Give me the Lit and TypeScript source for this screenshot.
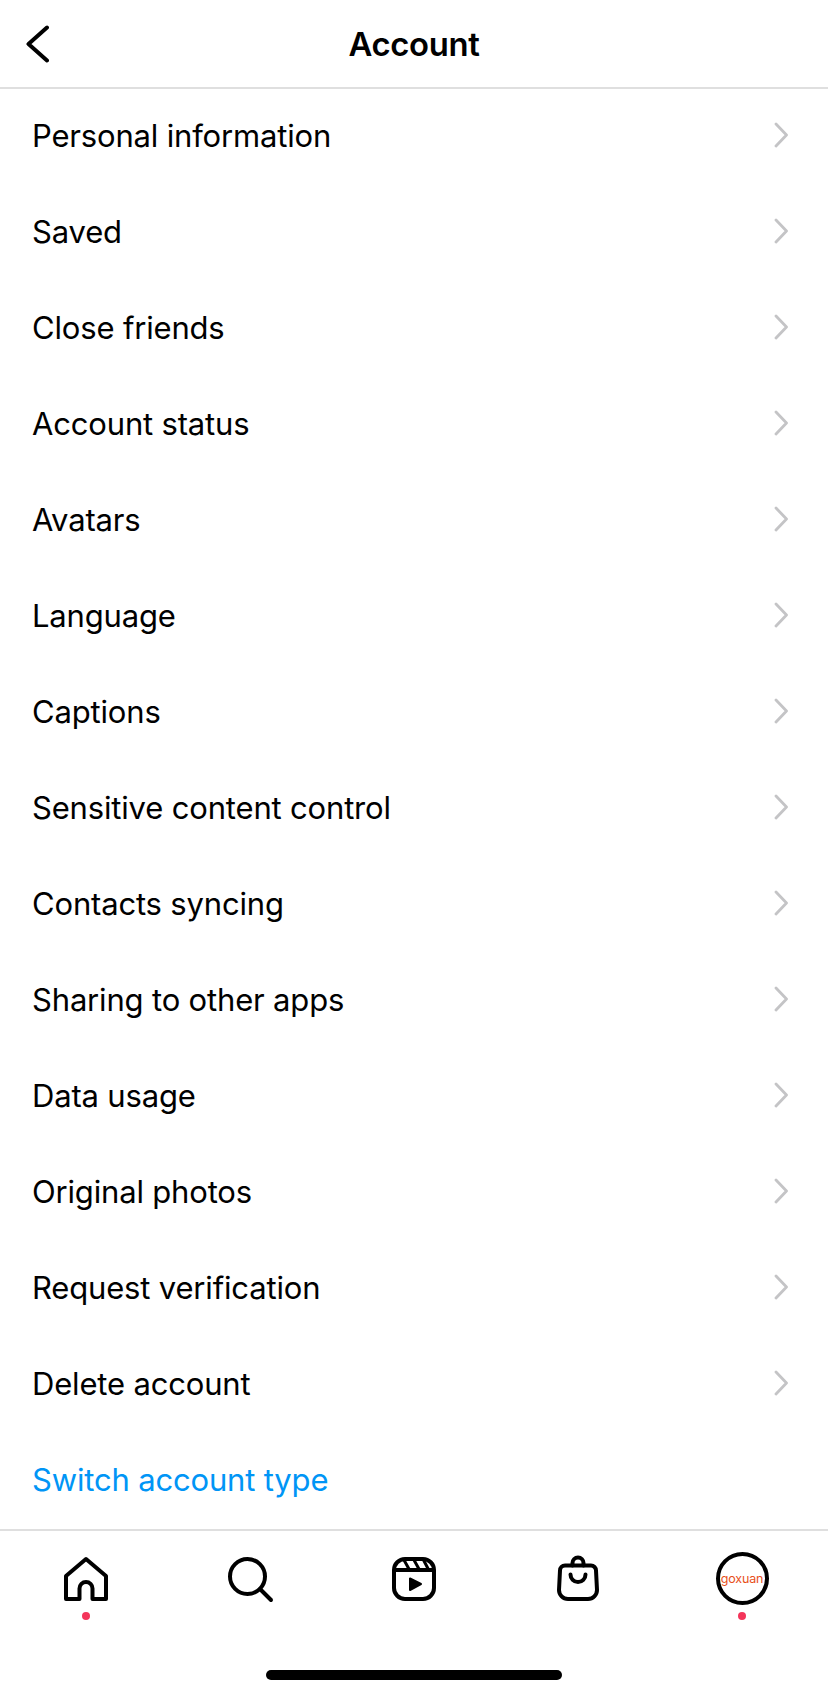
import { LitElement, html, css, svg } from "lit";
import { customElement } from "lit/decorators.js";

const ITEMS = [
  "Personal information", "Saved", "Close friends", "Account status", "Avatars", "Language", "Captions",
  "Sensitive content control", "Contacts syncing", "Sharing to other apps", "Data usage", "Original photos",
  "Request verification", "Delete account",
];

const chevron = html`<svg class="chev" width="14" height="26" viewBox="0 0 14 26" fill="none"><path d="M2 2l10.5 11L2 24" stroke="#c4c4c6" stroke-width="2.8" stroke-linecap="round" stroke-linejoin="round"/></svg>`;

const ic = (body: unknown) => html`<svg width="48" height="48" viewBox="0 0 48 48" fill="none" stroke="#000" stroke-width="4" stroke-linejoin="round" stroke-linecap="round">${body}</svg>`;

const home = ic(svg`<path d="M24 4L44 21V44H30.5V33.5a6.5 6.5 0 0 0-13 0V44H4V21Z" stroke-linecap="butt"/>`);
const search = ic(svg`<circle cx="21.5" cy="21.5" r="17.5"/><path d="M34 34L45 45"/>`);
const reels = ic(svg`<rect x="4" y="4" width="40" height="40" rx="11"/><path d="M5 15H43"/><path d="M14 5L19.5 15M24 5L29.5 15M33.5 5L38.5 14.5" stroke-width="3"/><path d="M20 23.5V35L31 29Z" fill="#000" stroke-width="2"/>`);
const bag = ic(svg`<path d="M11 10.5H37A5 5 0 0 1 42 15.5L43 35A9 9 0 0 1 34 44H14A9 9 0 0 1 5 35L6 15.5A5 5 0 0 1 11 10.5Z"/><path d="M18.5 10.5V8A5.5 5.5 0 0 1 29.5 8V10.5"/><path d="M16.5 19.5a7.5 7.5 0 0 0 15 0"/>`);

@customElement("app-root")
export class AppRoot extends LitElement {
  static styles = css`
    :host { display: block; width: 828px; height: 1696px; background: #fff; color: #000;
      font-family: Inter, "Liberation Sans", sans-serif; overflow: hidden; }
    .page { display: flex; flex-direction: column; height: 1696px; }
    header { height: 89px; box-sizing: border-box; display: flex; align-items: center; justify-content: center;
      position: relative; border-bottom: 2px solid #dfdfdf; flex: none; }
    .back { position: absolute; left: 25px; top: 25px; }
    h1 { margin: 0; font-size: 32.8px; font-weight: 600; letter-spacing: -0.3px; }
    ul { list-style: none; margin: 0; padding: 0; flex: none; }
    li { box-sizing: border-box; height: 96px; display: flex; align-items: center; justify-content: space-between;
      padding: 0 40px 4px 32px; font-size: 31px; letter-spacing: -0.17px; }
    li.blue { color: #0095f6; }
    footer { border-top: 2px solid #dfdfdf; flex: none; }
    nav { display: grid; grid-template-columns: repeat(5, 164px); padding: 20px 4px 0; }
    .tab { display: flex; flex-direction: column; align-items: center; height: 74px; position: relative; }
    .tab svg { display: block; margin-top: 4px; }
    .dot { position: absolute; top: 61px; left: 50%; margin-left: -4px; width: 8px; height: 8px; border-radius: 50%; background: #f4355a; }
    .avatar { box-sizing: border-box; width: 53px; height: 53px; border-radius: 50%; border: 4px solid #000;
      display: flex; align-items: center; justify-content: center; margin-top: 1px;
      color: #e8501a; font-size: 12.5px; font-weight: 400; letter-spacing: -0.2px; }
    .bar { width: 296px; height: 10px; border-radius: 5px; background: #000; margin: 45px auto 0; }
  `;

  render() {
    return html`<div class="page">
      <header>
        <svg class="back" width="24" height="38" viewBox="0 0 24 38" fill="none"><path d="M22 2.5L3.5 19L22 35.5" stroke="#000" stroke-width="4" stroke-linecap="round" stroke-linejoin="round"/></svg>
        <h1>Account</h1>
      </header>
      <ul>
        ${ITEMS.map((t) => html`<li><span>${t}</span>${chevron}</li>`)}
        <li class="blue"><span>Switch account type</span></li>
      </ul>
      <footer>
        <nav>
          <div class="tab">${home}<i class="dot"></i></div>
          <div class="tab">${search}</div>
          <div class="tab">${reels}</div>
          <div class="tab">${bag}</div>
          <div class="tab"><div class="avatar">goxuan</div><i class="dot"></i></div>
        </nav>
        <div class="bar"></div>
      </footer>
    </div>`;
  }
}
